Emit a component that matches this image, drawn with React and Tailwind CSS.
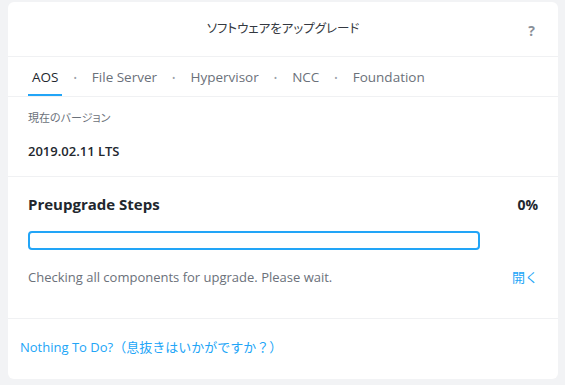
import React from 'react';

const tabs = ['AOS', 'File Server', 'Hypervisor', 'NCC', 'Foundation'];

const App = () => {
    return (
        <div className="w-[565px] h-[385px] bg-[#f2f3f5] pt-[2px] pl-[8px] pr-[7px] pb-[6px]" style={{ fontFamily: '"Open Sans", "Noto Sans CJK JP", sans-serif' }}>
            <div className="h-full bg-white rounded-[6px] flex flex-col">
                {/* Header */}
                <div className="h-[55px] flex items-center relative border-b border-[#f0f1f3]">
                    <div className="flex-1 text-center text-[12.5px] text-[#333840] [font-feature-settings:'palt']">ソフトウェアをアップグレード</div>
                    <div className="absolute right-[23px] top-[18px] text-[14px] font-bold text-[#8a9099]">?</div>
                </div>

                {/* Tabs */}
                <div className="h-[40px] flex items-stretch px-[20px] border-b border-[#f0f1f3]">
                    {tabs.map((t, i) => (
                        <div key={t} className="flex items-center pt-[2px]">
                            {i > 0 && <span className="mx-[11px] text-[9px] text-[#9aa0a8]">•</span>}
                            <div className={`h-full flex items-center px-[4px] text-[13.5px] ${i === 0 ? 'text-[#22272e] border-b-2 border-[#22a5f7] pt-[2px]' : 'text-[#6b717a]'}`}>{t}</div>
                        </div>
                    ))}
                </div>

                {/* Current version */}
                <div className="px-[20px] pt-[13px] pb-[15px] border-b border-[#f0f1f3]">
                    <div className="text-[11px] text-[#6b717a] [font-feature-settings:'palt']">現在のバージョン</div>
                    <div className="mt-[15px] text-[13px] font-semibold text-[#22272e]">2019.02.11 LTS</div>
                </div>

                {/* Preupgrade */}
                <div className="px-[20px] pt-[16px] pb-[31px] border-b border-[#f0f1f3]">
                    <div className="flex justify-between items-center">
                        <div className="text-[15px] font-bold text-[#22272e]">Preupgrade Steps</div>
                        <div className="text-[14px] font-bold text-[#22272e]">0%</div>
                    </div>
                    <div className="mt-[15px] w-[452px] h-[19px] border-2 border-[#22a5f7] rounded-[4px]"></div>
                    <div className="mt-[18px] flex justify-between items-center">
                        <div className="text-[13px] text-[#6b717a]">Checking all components for upgrade. Please wait.</div>
                        <div className="text-[13px] text-[#22a5f7]">開く</div>
                    </div>
                </div>

                {/* Footer */}
                <div className="flex-1 px-[12px] flex items-center">
                    <div className="text-[13px] text-[#22a5f7] -mt-[3px]">Nothing To Do?（息抜きはいかがですか？）</div>
                </div>
            </div>
        </div>
    );
};

export default App;
